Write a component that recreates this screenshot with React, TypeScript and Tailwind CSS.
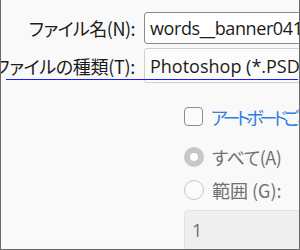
import React from "react";

const jp = { fontFamily: '"Noto Sans CJK JP", "Noto Sans", sans-serif' };
const lat = { fontFamily: '"Open Sans", "Noto Sans", sans-serif' };

export default function App() {
  return (
    <div className="w-[300px] h-[250px] bg-[#f9f9f9] border-l border-r border-b border-[#6b6b6b] overflow-hidden text-[18px] leading-none [font-feature-settings:'palt']" style={jp}>
      <div className="flex items-center mt-[12px] h-[32px]">
        <div className="w-[134px] shrink-0 flex justify-end text-[#1b1b1b] whitespace-nowrap tracking-[-0.5px]">ファイル名(N):</div>
        <div className="ml-[9px] shrink-0 w-[200px] h-[32px] bg-white border border-[#8a8a8a] rounded-[3px] flex items-center pl-[5px] text-[#1b1b1b] whitespace-nowrap tracking-[-0.4px]" style={lat}>
          words__banner041
        </div>
      </div>
      <div className="flex items-center mt-[4px] h-[35px] relative">
        <div className="w-[134px] shrink-0 flex justify-end whitespace-nowrap text-[#1b1b1b] tracking-[-0.3px]">ファイルの種類(T):</div>
        <div className="ml-[9px] shrink-0 w-[200px] h-[35px] bg-[#fbfbfb] border border-[#cfcfcf] rounded-[3px] flex items-center pl-[5px] text-[#1b1b1b] whitespace-nowrap" style={lat}>
          Photoshop (*.PSD;*.PDD;*.PSDT)
        </div>
        <div className="absolute left-[5px] top-[31px] w-[292px] h-[1px] bg-[#1a1aff]" />
      </div>
      <div className="ml-[183px] mt-[24px] flex flex-col">
        <div className="flex items-center h-[19px] gap-[8px] whitespace-nowrap">
          <div className="w-[19px] h-[19px] shrink-0 rounded-[4px] border border-[#8d8d8d] bg-[#fbfbfb]" />
          <span className="text-[#2f7fe0] tracking-[-4px]">アートボードごとにファイルを保存</span>
        </div>
        <div className="flex items-center h-[22px] mt-[20px] gap-[8px] whitespace-nowrap">
          <div className="w-[20px] h-[20px] shrink-0 rounded-full bg-[#c7c7c7] flex items-center justify-center">
            <div className="w-[8px] h-[8px] rounded-full bg-white" />
          </div>
          <span className="text-[#707070] tracking-[-0.5px]">すべて(A)</span>
        </div>
        <div className="flex items-center h-[22px] mt-[11px] gap-[8px] whitespace-nowrap">
          <div className="w-[20px] h-[20px] shrink-0 rounded-full border border-[#c7c7c7] bg-[#fbfbfb]" />
          <span className="text-[#707070]">範囲 (G):</span>
        </div>
        <div className="mt-[9px] w-[200px] h-[40px] bg-[#efefef] border border-[#e3e3e3] rounded-[3px] pl-[7px] pt-[10px] text-[#707070]" style={lat}>
          1
        </div>
      </div>
    </div>
  );
}
